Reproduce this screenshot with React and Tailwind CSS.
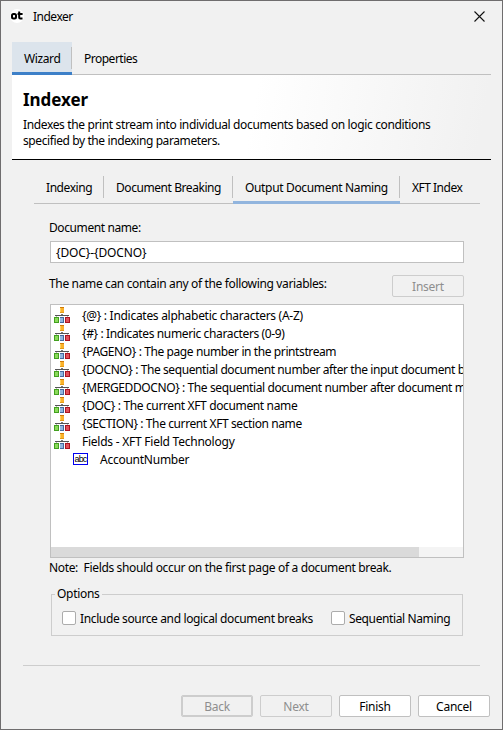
import React from 'react';

const TreeIcon = () => (
  <svg width="16" height="16" viewBox="0 0 16 16" shapeRendering="crispEdges" className="shrink-0">
    <rect x="6" y="0" width="4" height="6" fill="#fbb12a" />
    <rect x="6" y="0" width="4" height="1" fill="#d07a08" />
    <rect x="6" y="1" width="1" height="4" fill="#ffd05a" />
    <rect x="6" y="5" width="4" height="1" fill="#e39a18" />
    <rect x="7" y="7" width="2" height="1" fill="#777" />
    <rect x="1" y="8" width="14" height="1" fill="#555" />
    <rect x="2" y="9" width="1" height="1" fill="#bbb" />
    <rect x="13" y="9" width="1" height="1" fill="#bbb" />
    <rect x="0" y="10" width="5" height="6" fill="#43a01f" />
    <rect x="1" y="11" width="3" height="4" fill="#8cdb5b" />
    <rect x="6" y="10" width="4" height="6" fill="#46699c" />
    <rect x="6" y="11" width="3" height="4" fill="#8fb6e0" />
    <rect x="11" y="10" width="5" height="6" fill="#ac1420" />
    <rect x="12" y="11" width="3" height="4" fill="#e0505a" />
  </svg>
);

const AbcIcon = () => (
  <span className="flex h-[12px] w-[15px] shrink-0 items-center justify-center border border-[#0000f0] bg-white font-['Liberation_Sans',sans-serif] text-[9px] leading-none tracking-[-0.8px] text-black">
    abc
  </span>
);

const variables = [
  ['{@} : Indicates alphabetic characters (A-Z)', 'tracking-[-0.29px]'],
  ['{#} : Indicates numeric characters (0-9)', 'tracking-[-0.37px]'],
  ['{PAGENO} : The page number in the printstream', 'tracking-[-0.4px]'],
  ['{DOCNO} : The sequential document number after the input document break', 'tracking-[-0.41px]'],
  ['{MERGEDDOCNO} : The sequential document number after document merging', 'tracking-[-0.4px]'],
  ['{DOC} : The current XFT document name', 'tracking-[-0.36px]'],
  ['{SECTION} : The current XFT section name', 'tracking-[-0.4px]'],
  ['Fields - XFT Field Technology', 'tracking-[-0.24px]'],
];

const Check = () => <span className="h-[14px] w-[14px] shrink-0 rounded-[2px] border border-[#acacac] bg-white" />;

const btn = 'flex h-[22px] w-[72px] items-center justify-center rounded-[2px] border pt-[2px] tracking-[-0.25px]';

export default function App() {
  return (
    <div className="flex h-[730px] w-[503px] flex-col overflow-hidden whitespace-pre border border-[#6f6d6e] bg-[#f1f1f1] font-['Noto_Sans',sans-serif] text-[12px] leading-[16px] tracking-[-0.38px] text-black">
      <header className="flex h-[41px] shrink-0 items-start pl-[9px] pr-[17px]">
        <svg width="14" height="14" viewBox="0 0 14 14" className="mt-[8px]">
          <circle cx="7" cy="7" r="7" fill="#fff" />
          <rect x="2" y="5" width="4" height="4.6" rx="1.5" fill="none" stroke="#000" strokeWidth="2" />
          <path d="M9.2 2.5V8.6Q9.2 9.6 10.2 9.6H12.5M7.6 5H12.6" fill="none" stroke="#000" strokeWidth="2" />
        </svg>
        <span className="ml-[9px] mt-[8px] tracking-[-0.5px]">Indexer</span>
        <svg width="11" height="11" viewBox="0 0 11 11" className="ml-auto mt-[10px]">
          <path d="M.5 .5L10.5 10.5M10.5 .5L.5 10.5" stroke="#111" strokeWidth="1.1" />
        </svg>
      </header>

      <nav className="mx-[11px] flex h-[33px] shrink-0">
        <div className="flex w-[60px] flex-col border-b-[3px] border-[#3d80c8] bg-[#dce4ec]">
          <div className="mt-[5px] h-[22px] border-r border-[#c0c0c0] pl-[12px] pt-[4px]">Wizard</div>
        </div>
        <div className="flex-1 border-b border-[#c0c0c0] pl-[12px] pt-[9px] tracking-[-0.5px]">Properties</div>
      </nav>

      <section className="mx-[11px] h-[85px] shrink-0 border-b border-black bg-[linear-gradient(100deg,#fff_50%,#f1f1f1_97%)] pl-[11px] pt-[14px]">
        <h1 className="text-[17px] font-bold leading-[22px] tracking-[-0.05px]">Indexer</h1>
        <p className="mt-[6px] tracking-[-0.36px]">Indexes the print stream into individual documents based on logic conditions</p>
        <p className="tracking-[-0.4px]">specified by the indexing parameters.</p>
      </section>

      <nav className="ml-[33px] mr-[22px] mt-[15px] flex h-[29px] shrink-0">
        <div className="w-[70px] border-b border-[#c0c0c0]">
          <div className="mt-px h-[22px] border-r border-[#c0c0c0] pl-[12px] pt-[4px] tracking-[-0.43px]">Indexing</div>
        </div>
        <div className="w-[129px] border-b border-[#c0c0c0]">
          <div className="mt-px h-[22px] border-r border-[#c0c0c0] pl-[12px] pt-[4px] tracking-[-0.43px]">Document Breaking</div>
        </div>
        <div className="w-[167px] border-b-[3px] border-[#92b5de]">
          <div className="mt-px h-[22px] border-r border-[#c0c0c0] pl-[12px] pt-[4px] tracking-[-0.34px]">Output Document Naming</div>
        </div>
        <div className="flex-1 border-b border-[#c0c0c0] pl-[12px] pt-[5px] tracking-[-0.5px]">XFT Index</div>
      </nav>

      <main className="ml-[49px] mr-[38px] flex flex-col">
        <div className="-ml-px mt-[16px] h-[16px] tracking-[-0.4px]">Document name:</div>
        <div className="mt-[5px] flex h-[22px] items-center border border-[#c0c0c0] bg-white pl-[5px] pt-[2px] tracking-[-0.12px]">{'{DOC}-{DOCNO}'}</div>
        <div className="mt-[12px] flex h-[22px] justify-between">
          <span className="-ml-px pt-px tracking-[-0.35px]">The name can contain any of the following variables:</span>
          <div className={btn + ' border-[#cdcdcd] text-[#8e8e8e]'}>Insert</div>
        </div>
        <div className="mt-[7px] flex h-[254px] flex-col overflow-hidden border border-[#c0c0c0] bg-white">
          <div className="flex-1 pt-[2px]">
            {variables.map(([text, tracking]) => (
              <div key={text} className={'flex h-[18px] pl-[3px] ' + tracking}>
                <TreeIcon />
                <span className="ml-[12px] pt-px">{text}</span>
              </div>
            ))}
            <div className="flex h-[18px] pl-[22px] pt-px">
              <div className="pt-px">
                <AbcIcon />
              </div>
              <span className="ml-[12px] tracking-[-0.25px]">AccountNumber</span>
            </div>
          </div>
          <div className="h-[10px] bg-[#f4f4f4]">
            <div className="h-full w-[368px] bg-[#dadada]" />
          </div>
        </div>
        <div className="-ml-px mt-[2px] h-[16px] tracking-[-0.34px]">Note:  Fields should occur on the first page of a document break.</div>
        <fieldset className="ml-px mr-px mt-[10px] h-[50px] border border-[#cdcdcd]">
          <legend className="ml-[3px] h-[16px] px-[2px] tracking-[-0.3px]">Options</legend>
          <div className="flex items-start pl-[10px] pt-[9px]">
            <Check />
            <span className="ml-[4px] w-[251px] tracking-[-0.37px]">Include source and logical document breaks</span>
            <Check />
            <span className="ml-[4px] tracking-[-0.38px]">Sequential Naming</span>
          </div>
        </fieldset>
      </main>

      <footer className="ml-[22px] mt-[29px] flex h-[53px] flex-col">
        <div className="mr-[22px] h-px shrink-0 bg-[#cdcdcd]" />
        <div className="mr-[12px] mt-[29px] flex justify-end gap-[7px]">
          <div className={btn + ' border-[#cdcdcd] text-[#8e8e8e] shadow-[inset_0_0_0_1px_#cdcdcd]'}>Back</div>
          <div className={btn + ' border-[#cdcdcd] text-[#8e8e8e]'}>Next</div>
          <div className={btn + ' border-[#c0c0c0] bg-white'}>Finish</div>
          <div className={btn + ' border-[#c0c0c0] bg-white'}>Cancel</div>
        </div>
      </footer>
    </div>
  );
}
